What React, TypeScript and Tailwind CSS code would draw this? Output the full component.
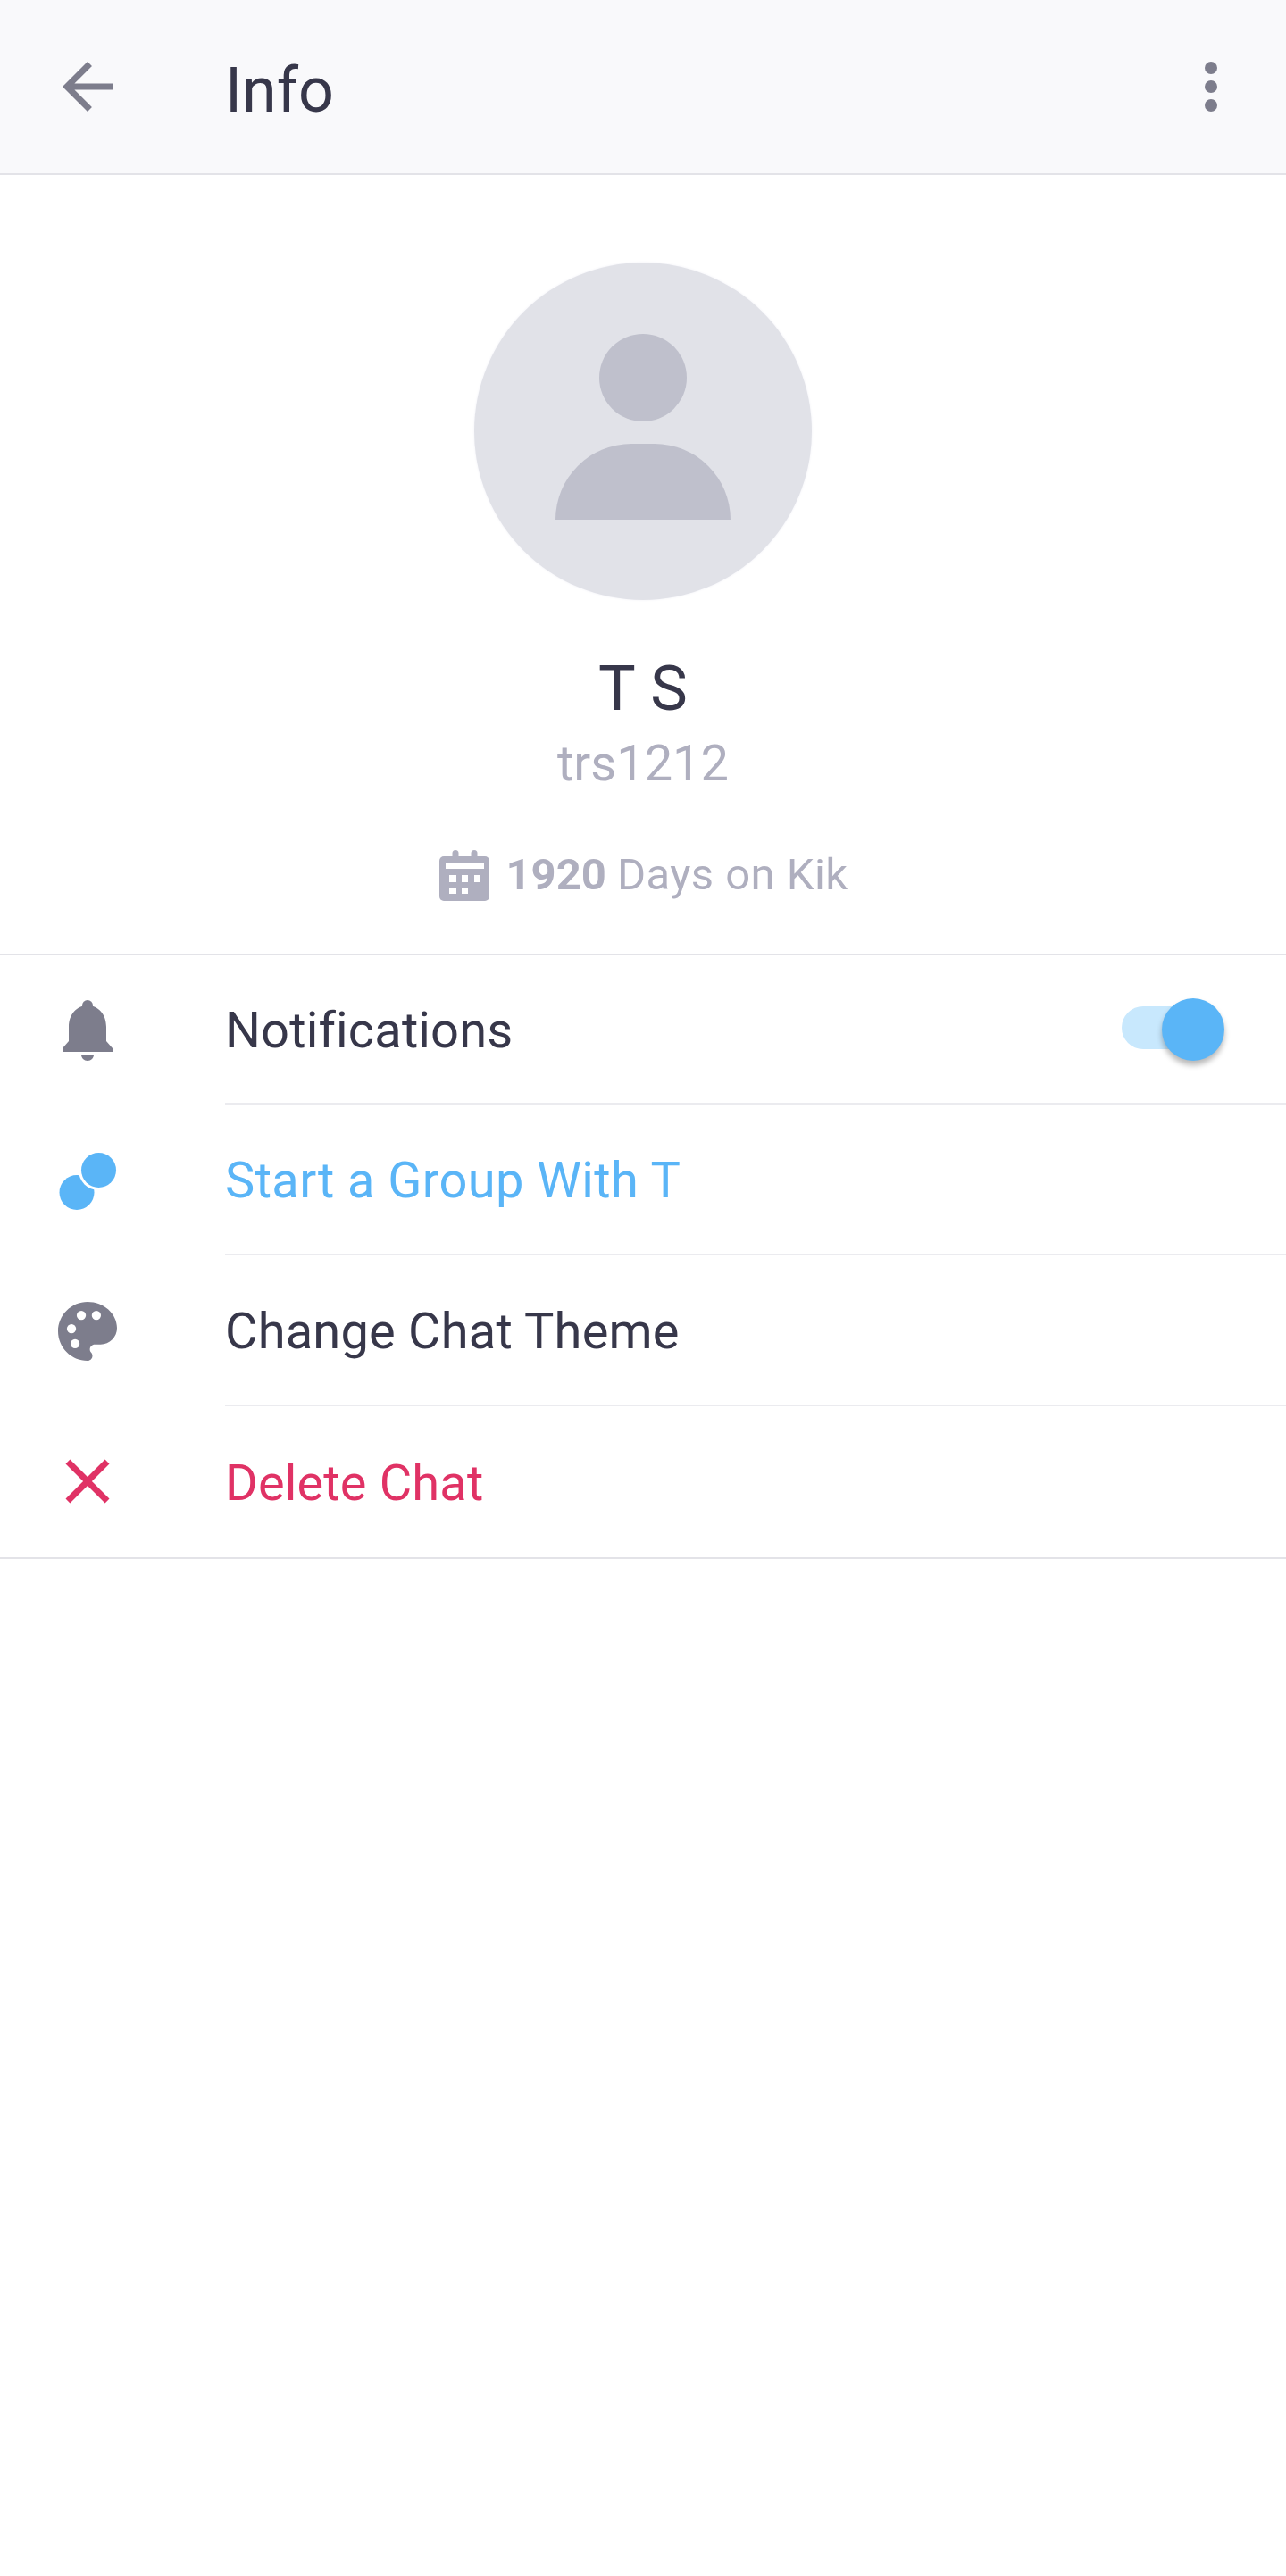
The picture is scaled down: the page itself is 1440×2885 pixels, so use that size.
import type { ReactNode } from "react";

function BackIcon() {
  return (
    <svg width="84" height="84" viewBox="0 0 24 24" fill="#7d7d8c">
      <path d="M20 11H7.83l5.59-5.59L12 4l-8 8 8 8 1.41-1.41L7.83 13H20v-2z" />
    </svg>
  );
}

function BellIcon() {
  return (
    <svg width="56" height="68" viewBox="0 0 56 68" fill="#7d7d8c">
      <circle cx="28" cy="6" r="6" />
      <path d="M28 6C40 6 49 16 49 30V46L56 54V58H0V54L7 46V30C7 16 16 6 28 6Z" />
      <path d="M21 61H35C35 65 32 68 28 68C24 68 21 65 21 61Z" />
    </svg>
  );
}

function GroupIcon() {
  return (
    <svg width="66" height="66" viewBox="0 0 66 66">
      <circle cx="21" cy="46.5" r="19.5" fill="#5ab5f7" />
      <circle cx="45.5" cy="21.5" r="22.5" fill="#ffffff" />
      <circle cx="45.5" cy="21.5" r="19.5" fill="#5ab5f7" />
    </svg>
  );
}

function PaletteIcon() {
  return (
    <svg width="66" height="66" viewBox="3 3 18 18">
      <path
        fill="#7d7d8c"
        d="M12 3c-4.97 0-9 4.03-9 9s4.03 9 9 9c.83 0 1.5-.67 1.5-1.5 0-.39-.15-.74-.39-1.01-.24-.27-.39-.62-.39-.99 0-.83.67-1.5 1.5-1.5H16c2.76 0 5-2.24 5-5 0-4.42-4.03-8-9-8z"
      />
      <circle cx="10.1" cy="7.1" r="1.4" fill="#ffffff" />
      <circle cx="14.7" cy="7.1" r="1.4" fill="#ffffff" />
      <circle cx="7.1" cy="11.2" r="1.4" fill="#ffffff" />
      <circle cx="8.2" cy="15.8" r="1.4" fill="#ffffff" />
    </svg>
  );
}

function CloseIcon() {
  return (
    <svg width="84" height="84" viewBox="0 0.3 24 24" fill="#e03265">
      <path d="M19 6.41L17.59 5 12 10.59 6.41 5 5 6.41 10.59 12 5 17.59 6.41 19 12 13.41 17.59 19 19 17.59 13.41 12z" />
    </svg>
  );
}

function CalendarIcon() {
  return (
    <svg width="56" height="57" viewBox="0 0 56 57" fill="#afafbf">
      <rect x="14.5" y="0" width="7" height="12" rx="3.5" />
      <rect x="35.5" y="0" width="7" height="12" rx="3.5" />
      <rect x="0" y="7" width="56" height="50" rx="5" />
      <g fill="#ffffff">
        <rect x="7" y="15" width="43" height="6" />
        <rect x="11" y="28" width="8" height="8" />
        <rect x="25" y="28" width="7" height="8" />
        <rect x="39" y="28" width="7" height="8" />
        <rect x="11" y="42" width="8" height="7" />
        <rect x="25" y="42" width="7" height="7" />
      </g>
    </svg>
  );
}

function Toggle() {
  return (
    <div className="relative mr-[75px] mb-[4px] h-[48px] w-[109px] rounded-full bg-[#c8e8fd]">
      <div className="absolute left-[45px] top-[-9px] h-[70px] w-[70px] rounded-full bg-[#5ab5f7] shadow-[0_5px_6px_rgba(0,0,0,0.28)]" />
    </div>
  );
}

type Row = {
  label: string;
  icon: ReactNode;
  labelClass: string;
  rowClass: string;
  trailing?: ReactNode;
};

const rows: Row[] = [
  {
    label: "Notifications",
    icon: <BellIcon />,
    labelClass: "text-[#37374a] tracking-[0.15px]",
    rowClass: "h-[167px]",
    trailing: <Toggle />,
  },
  {
    label: "Start a Group With T",
    icon: <GroupIcon />,
    labelClass: "text-[#5ab5f7] tracking-[0.4px]",
    rowClass: "h-[169px]",
  },
  {
    label: "Change Chat Theme",
    icon: <PaletteIcon />,
    labelClass: "text-[#37374a] tracking-[0.2px]",
    rowClass: "h-[169px]",
  },
  {
    label: "Delete Chat",
    icon: <CloseIcon />,
    labelClass: "text-[#e03265] tracking-[0.15px]",
    rowClass: "h-[169px]",
  },
];

export default function App() {
  return (
    <div className="min-h-[2885px] bg-white font-[Roboto,sans-serif]">
      <header className="flex h-[196px] items-center border-b-2 border-[#e3e3e8] bg-[#f9f9fb]">
        <div className="flex w-[196px] justify-center">
          <BackIcon />
        </div>
        <h1 className="ml-[56px] pt-[8px] text-[70px] leading-[84px] font-normal text-[#37374a]">Info</h1>
        <div className="mr-[77px] ml-auto flex flex-col gap-[7px]">
          <span className="h-[14px] w-[14px] rounded-full bg-[#7d7d8c]" />
          <span className="h-[14px] w-[14px] rounded-full bg-[#7d7d8c]" />
          <span className="h-[14px] w-[14px] rounded-full bg-[#7d7d8c]" />
        </div>
      </header>

      <section className="flex flex-col items-center border-b-2 border-[#e3e3e8] pt-[98px] pb-[58px]">
        <div className="flex h-[378px] w-[378px] flex-col items-center rounded-full bg-[#e1e2e8] pt-[80px] shadow-[0_0_3px_#f0f0f6]">
          <div className="h-[98px] w-[98px] rounded-full bg-[#bfc0cc]" />
          <div className="mt-[25px] h-[85px] w-[196px] rounded-t-[98px] bg-[#bfc0cc]" />
        </div>
        <div className="mt-[57px] text-[70px] leading-[84px] tracking-[0.3px] text-[#37374a]">T S</div>
        <div className="mt-[10px] text-[56px] leading-[64px] text-[#afafbf]">trs1212</div>
        <div className="mt-[63px] flex h-[60px] items-center pl-[2px] text-[49px] text-[#afafbf]">
          <CalendarIcon />
          <span className="ml-[18px] font-bold">1920</span>
          <span className="ml-[12px] tracking-[0.45px]">Days on Kik</span>
        </div>
      </section>

      <div className="border-b-2 border-[#e3e3e8]">
        {rows.map((row, i) => (
          <div key={row.label} className={`flex items-center ${row.rowClass}`}>
            <div className="flex w-[196px] shrink-0 justify-center">{row.icon}</div>
            <div
              className={
                i < rows.length - 1
                  ? "ml-[56px] flex h-full flex-1 items-center border-b-2 border-[#ebebef]"
                  : "ml-[56px] flex h-full flex-1 items-center"
              }
            >
              <span className={`pt-[3px] text-[56px] leading-[64px] ${row.labelClass}`}>{row.label}</span>
              {row.trailing && <div className="ml-auto">{row.trailing}</div>}
            </div>
          </div>
        ))}
      </div>
    </div>
  );
}
